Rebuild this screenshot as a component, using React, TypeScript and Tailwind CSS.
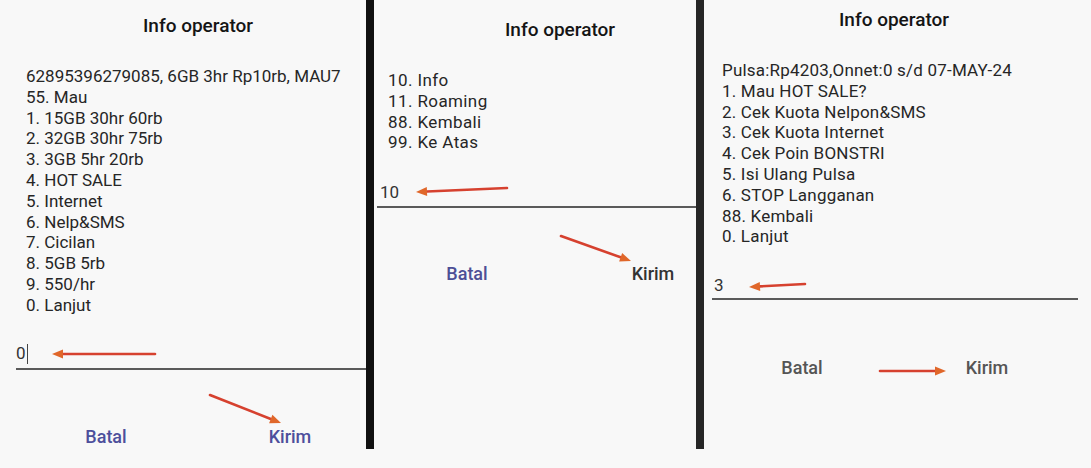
const font = { fontFamily: 'Roboto, "Noto Sans", sans-serif' };

type Arrow = [number, number, number, number];

// annotation arrows drawn over the screenshots: [fromX, fromY, toX, toY]
const arrows: Arrow[] = [
  [155, 354, 52, 354],
  [210, 395, 281, 423],
  [507, 188, 416, 192],
  [561, 236, 631, 261],
  [805, 284, 749, 287],
  [880, 371, 946, 371],
];

function ArrowPath({ a }: { a: Arrow }) {
  const [x1, y1, x2, y2] = a;
  const dx = x2 - x1;
  const dy = y2 - y1;
  const len = Math.hypot(dx, dy);
  const ux = dx / len;
  const uy = dy / len;
  const hl = 11;
  const hw = 4.5;
  const bx = x2 - ux * hl;
  const by = y2 - uy * hl;
  const pts = `${x2},${y2} ${bx - uy * hw},${by + ux * hw} ${bx + uy * hw},${by - ux * hw}`;
  return (
    <g>
      <line x1={x1} y1={y1} x2={bx} y2={by} stroke="#d6412f" strokeWidth={2.6} strokeLinecap="round" />
      <polygon points={pts} fill="#e0672a" />
    </g>
  );
}

function Lines({ items, className = '' }: { items: string[]; className?: string }) {
  return (
    <div className={`text-[17px] leading-[20.8px] text-[#262626] whitespace-nowrap ${className}`}>
      {items.map((t) => (
        <div key={t}>{t}</div>
      ))}
    </div>
  );
}

export default function App() {
  return (
    <div className="relative w-[1091px] h-[468px] bg-[#f8f8f8] overflow-hidden" style={font}>
      <div className="flex items-start h-[449px]">
        {/* panel 1 */}
        <div className="w-[366px] h-full flex flex-col">
          <div className="pt-[14px] pl-[30px] text-center text-[19px] leading-[24px] font-medium text-[#151515]">
            Info operator
          </div>
          <div className="mt-[28px] pl-[26px]">
            <Lines
              items={[
                '62895396279085, 6GB 3hr Rp10rb, MAU7',
                '55. Mau',
                '1. 15GB 30hr 60rb',
                '2. 32GB 30hr 75rb',
                '3. 3GB 5hr 20rb',
                '4. HOT SALE',
                '5. Internet',
                '6. Nelp&SMS',
                '7. Cicilan',
                '8. 5GB 5rb',
                '9. 550/hr',
                '0. Lanjut',
              ]}
            />
          </div>
          <div className="mt-[26px] pl-[16px]">
            <div className="flex items-center h-[24px] text-[17px] text-[#333]">
              0<span className="ml-px w-px h-[20px] bg-[#444]" />
            </div>
            <div className="mt-[2px] h-[2px] bg-[#5a5a5a]" />
          </div>
          <div className="mt-[55px] pl-[46px] flex gap-[64px] text-[18px] leading-[24px] font-medium text-[#4d4f9c]">
            <div className="w-[120px] text-center">Batal</div>
            <div className="w-[120px] text-center">Kirim</div>
          </div>
        </div>

        <div className="w-[8px] h-full bg-[#111]" />

        {/* panel 2 */}
        <div className="w-[322px] h-full flex flex-col">
          <div className="pt-[18px] pl-[50px] text-center text-[19px] leading-[24px] font-medium text-[#151515]">
            Info operator
          </div>
          <div className="mt-[28px] pl-[14px]">
            <Lines className="tracking-[0.4px]" items={['10. Info', '11. Roaming', '88. Kembali', '99. Ke Atas']} />
          </div>
          <div className="mt-[27px] pl-[3px]">
            <div className="pl-[3px] h-[24px] leading-[24px] text-[17px] text-[#333]">10</div>
            <div className="mt-[2px] h-[2px] bg-[#5a5a5a]" />
          </div>
          <div className="mt-[54px] pl-[53px] flex gap-[106px] text-[18px] leading-[24px] font-medium">
            <div className="w-[80px] text-center text-[#4d4f96]">Batal</div>
            <div className="w-[80px] text-center text-[#333]">Kirim</div>
          </div>
        </div>

        <div className="w-[8px] h-full bg-[#262626]" />

        {/* panel 3 */}
        <div className="flex-1 h-full flex flex-col">
          <div className="pt-[8px] pr-[7px] text-center text-[19px] leading-[24px] font-medium text-[#151515]">
            Info operator
          </div>
          <div className="mt-[28px] pl-[18px]">
            <Lines
              className="tracking-[0.2px]"
              items={[
                'Pulsa:Rp4203,Onnet:0 s/d 07-MAY-24',
                '1. Mau HOT SALE?',
                '2. Cek Kuota Nelpon&SMS',
                '3. Cek Kuota Internet',
                '4. Cek Poin BONSTRI',
                '5. Isi Ulang Pulsa',
                '6. STOP Langganan',
                '88. Kembali',
                '0. Lanjut',
              ]}
            />
          </div>
          <div className="mt-[26px] pl-[8px] pr-[13px]">
            <div className="pl-[2px] h-[24px] leading-[24px] text-[17px] text-[#333]">3</div>
            <div className="mt-px h-[2px] bg-[#5a5a5a]" />
          </div>
          <div className="mt-[56px] pl-[58px] flex gap-[105px] text-[18px] leading-[24px] font-medium text-[#555]">
            <div className="w-[80px] text-center">Batal</div>
            <div className="w-[80px] text-center">Kirim</div>
          </div>
        </div>
      </div>

      <svg className="absolute inset-0 pointer-events-none" width={1091} height={468}>
        {arrows.map((a, i) => (
          <ArrowPath key={i} a={a} />
        ))}
      </svg>
    </div>
  );
}
